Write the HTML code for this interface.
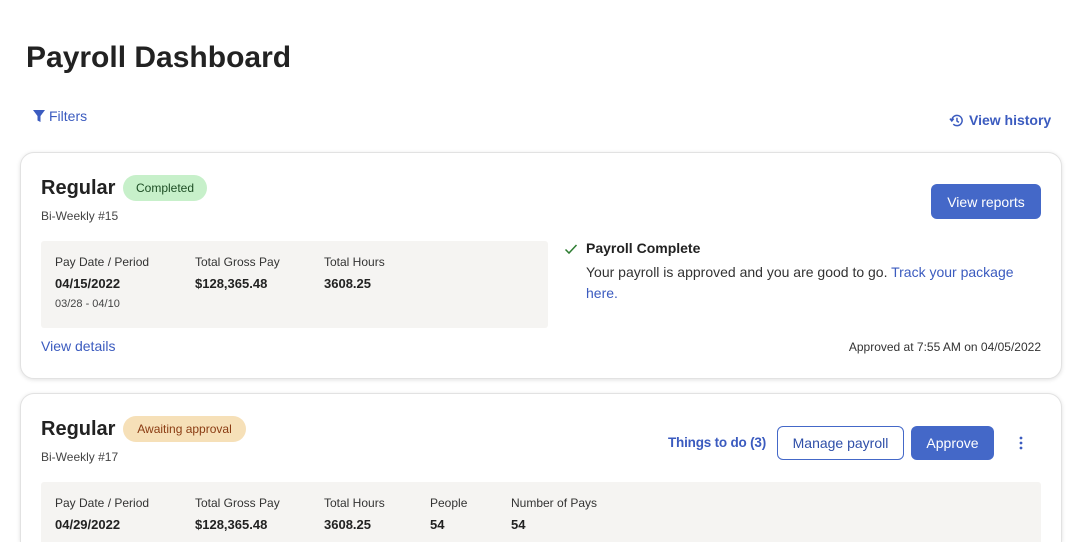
<!DOCTYPE html>
<html style="width:1082px;height:542px;overflow:hidden"><head><meta charset="utf-8"><style>
*{margin:0;padding:0;box-sizing:border-box}
body{width:1082px;height:542px;overflow:hidden;background:#fff;font-family:"Liberation Sans",sans-serif;color:#222;position:relative}
.a{position:absolute;white-space:nowrap}
.blue{color:#3b5bbf}
.card{position:absolute;left:20px;width:1042px;border:1px solid #e2e2e2;border-radius:14px;box-shadow:0 1px 4px rgba(0,0,0,.12);background:#fff}
.gray{position:absolute;background:#f5f4f2;border-radius:3px}
.lbl{font-size:12px;color:#333}
.val{font-size:13px;font-weight:bold;color:#222}
.btn{position:absolute;border-radius:6px;font-size:14px;display:flex;align-items:center;justify-content:center}
</style></head><body>
<div class="a" style="left:26px;top:41px;font-size:30px;font-weight:bold;color:#222">Payroll Dashboard</div>
<svg class="a" style="left:32px;top:109px" width="14" height="14" viewBox="0 0 14 14"><path d="M1 1h12L8.5 7v6l-3-1.5V7z" fill="#3b5bbf"/></svg>
<div class="a blue" style="left:49px;top:108px;font-size:14px">Filters</div>
<svg class="a" style="left:949px;top:113px" width="15" height="15" viewBox="0 0 16 16" fill="none" stroke="#3b5bbf" stroke-width="1.6"><path d="M3 8a5.5 5.5 0 1 1 1.6 3.9"/><path d="M1 6l2 2.5L5 6"/><path d="M8.5 5v3.5l2 1.5"/></svg>
<div class="a blue" style="left:969px;top:112px;font-size:14px;font-weight:bold">View history</div>

<div class="card" style="top:152px;height:227px"></div>
<div class="a" style="left:41px;top:177px;font-size:20px;font-weight:bold">Regular</div>
<div class="a" style="left:123px;top:175px;width:84px;height:26px;border-radius:13px;background:#c7f0ca;font-size:12px;color:#1d4d24;display:flex;align-items:center;justify-content:center">Completed</div>
<div class="a" style="left:41px;top:209px;font-size:12px;color:#444">Bi-Weekly #15</div>
<div class="gray" style="left:41px;top:241px;width:507px;height:87px"></div>
<div class="a lbl" style="left:55px;top:255px">Pay Date / Period</div>
<div class="a lbl" style="left:195px;top:255px">Total Gross Pay</div>
<div class="a lbl" style="left:324px;top:255px">Total Hours</div>
<div class="a val" style="left:55px;top:276px">04/15/2022</div>
<div class="a val" style="left:195px;top:276px">$128,365.48</div>
<div class="a val" style="left:324px;top:276px">3608.25</div>
<div class="a" style="left:55px;top:298px;font-size:11px;color:#444">03/28 - 04/10</div>
<div class="a blue" style="left:41px;top:338px;font-size:14px">View details</div>
<div class="btn" style="left:931px;top:184px;width:110px;height:35px;background:#4468c8;color:#fff">View reports</div>
<svg class="a" style="left:564px;top:243px" width="14" height="12" viewBox="0 0 14 12"><path d="M1.5 6.5l3.5 3.5 7.5-8" fill="none" stroke="#2e7d32" stroke-width="1.5"/></svg>
<div class="a" style="left:586px;top:240px;font-size:14px;font-weight:bold">Payroll Complete</div>
<div class="a" style="left:586px;top:264px;font-size:14px;color:#333">Your payroll is approved and you are good to go. <span class="blue">Track your package</span></div>
<div class="a blue" style="left:586px;top:285px;font-size:14px">here.</div>
<div class="a" style="right:41px;top:340px;font-size:12px;color:#333">Approved at 7:55 AM on 04/05/2022</div>

<div class="card" style="top:393px;height:149px;border-bottom:none;border-radius:14px 14px 0 0"></div>
<div class="a" style="left:41px;top:418px;font-size:20px;font-weight:bold">Regular</div>
<div class="a" style="left:123px;top:416px;width:123px;height:26px;border-radius:13px;background:#f6e0b8;font-size:12px;color:#8a3b12;display:flex;align-items:center;justify-content:center">Awaiting approval</div>
<div class="a" style="left:41px;top:450px;font-size:12px;color:#444">Bi-Weekly #17</div>
<div class="a blue" style="left:668px;top:435px;font-size:13.5px;font-weight:bold;letter-spacing:-0.2px">Things to do (3)</div>
<div class="btn" style="left:777px;top:426px;width:127px;height:34px;border:1.5px solid #4468c8;color:#2f4fa8;background:#fff">Manage payroll</div>
<div class="btn" style="left:911px;top:426px;width:83px;height:34px;background:#4468c8;color:#fff">Approve</div>
<svg class="a" style="left:1018px;top:435px" width="6" height="16"><circle cx="3" cy="3" r="1.4" fill="#3b5bbf"/><circle cx="3" cy="8" r="1.4" fill="#3b5bbf"/><circle cx="3" cy="13" r="1.4" fill="#3b5bbf"/></svg>
<div class="gray" style="left:41px;top:482px;width:1000px;height:60px;border-radius:3px 3px 0 0"></div>
<div class="a lbl" style="left:55px;top:496px">Pay Date / Period</div>
<div class="a lbl" style="left:195px;top:496px">Total Gross Pay</div>
<div class="a lbl" style="left:324px;top:496px">Total Hours</div>
<div class="a lbl" style="left:430px;top:496px">People</div>
<div class="a lbl" style="left:511px;top:496px">Number of Pays</div>
<div class="a val" style="left:55px;top:517px">04/29/2022</div>
<div class="a val" style="left:195px;top:517px">$128,365.48</div>
<div class="a val" style="left:324px;top:517px">3608.25</div>
<div class="a val" style="left:430px;top:517px">54</div>
<div class="a val" style="left:511px;top:517px">54</div>
</body></html>
